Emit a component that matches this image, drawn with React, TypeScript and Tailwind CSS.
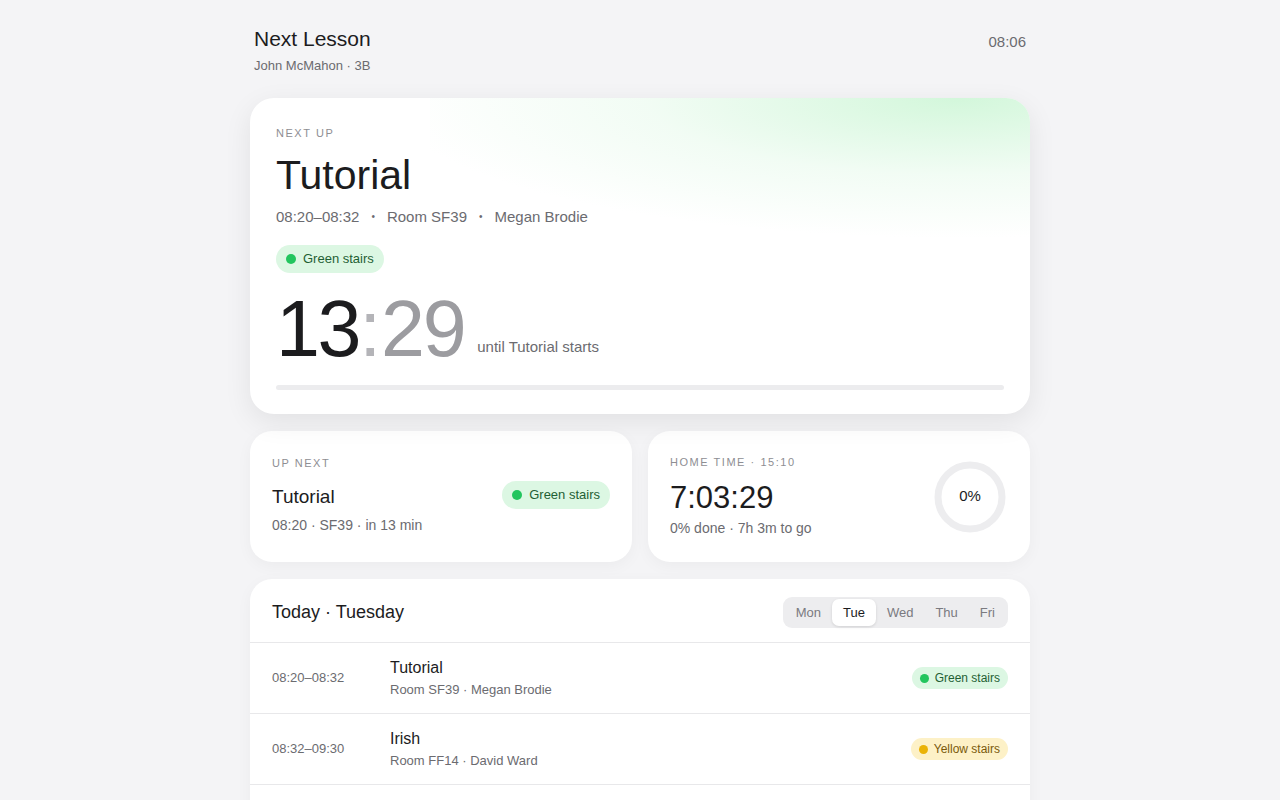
import React from "react";

const font = { fontFamily: '"Liberation Sans", Arial, sans-serif' };

type Stairs = "green" | "yellow";

const Pill = ({ kind, size = "md" }: { kind: Stairs; size?: "md" | "sm" }) => {
  const green = kind === "green";
  const base = size === "md" ? "h-[28px] px-[10px] gap-[7px] text-[13px]" : "h-[22px] px-[8px] gap-[6px] text-[12px]";
  return (
    <span
      className={`inline-flex items-center rounded-full ${base} ${
        green ? "bg-[#dcf7e3] text-[#1f5f34]" : "bg-[#fdf1c7] text-[#7a5a0c]"
      }`}
    >
      <span
        className={`rounded-full ${size === "md" ? "h-[10px] w-[10px]" : "h-[9px] w-[9px]"} ${
          green ? "bg-[#22c55e]" : "bg-[#eab308]"
        }`}
      />
      {green ? "Green stairs" : "Yellow stairs"}
    </span>
  );
};

// only the rows that fit in the first screen
const lessons = [
  { time: "08:20–08:32", title: "Tutorial", sub: "Room SF39 · Megan Brodie", stairs: "green" as Stairs },
  { time: "08:32–09:30", title: "Irish", sub: "Room FF14 · David Ward", stairs: "yellow" as Stairs },
];

const days = ["Mon", "Tue", "Wed", "Thu", "Fri"];

export default function App() {
  return (
    <div className="min-h-screen bg-[#f4f4f6] text-[#1c1c1e]" style={font}>
      <div className="mx-auto w-[780px] pt-[26px] pb-10">
        {/* header */}
        <div className="flex items-start justify-between px-[4px]">
          <div>
            <h1 className="text-[21px] leading-[26px] text-[#1c1c1e]">Next Lesson</h1>
            <p className="mt-[6px] text-[13px] leading-[16px] text-[#6b6b70]">John McMahon · 3B</p>
          </div>
          <div className="mt-[5px] text-[15px] text-[#6b6b70]">08:06</div>
        </div>

        {/* hero */}
        <div className="relative mt-[24px] overflow-hidden rounded-[24px] bg-white shadow-[0_8px_28px_rgba(0,0,0,0.08)]">
          <div className="pointer-events-none absolute right-0 top-0 h-[140px] w-[600px] bg-[radial-gradient(ellipse_95%_100%_at_88%_0%,rgba(200,245,210,0.8),rgba(222,248,228,0.4)_55%,rgba(255,255,255,0)_100%)]" />
          <div className="relative px-[26px] pt-[28px] pb-[24px]">
            <div className="text-[11px] leading-[14px] tracking-[0.14em] text-[#8e8e93]">NEXT UP</div>
            <div className="mt-[12px] text-[41px] leading-[46px] text-[#1c1c1e]">Tutorial</div>
            <div className="mt-[10px] flex items-center text-[15px] leading-[18px] text-[#6b6b70]">
              <span>08:20–08:32</span>
              <span className="mx-[12px] text-[10px]">•</span>
              <span>Room SF39</span>
              <span className="mx-[12px] text-[10px]">•</span>
              <span>Megan Brodie</span>
            </div>
            <div className="mt-[19px]">
              <Pill kind="green" />
            </div>
            <div className="mt-[16px] flex items-baseline">
              <span className="text-[79px] leading-[80px] tracking-[-0.03em] text-[#1c1c1e]">13</span>
              <span className="text-[79px] leading-[80px] text-[#b4b4b8]">:</span>
              <span className="text-[79px] leading-[80px] tracking-[-0.03em] text-[#9c9ca0]">29</span>
              <span className="ml-[13px] -translate-y-[4px] text-[15px] text-[#6b6b70]">until Tutorial starts</span>
            </div>
            <div className="mt-[16px] h-[5px] rounded-full bg-[#ececee]" />
          </div>
        </div>

        {/* cards row */}
        <div className="mt-[17px] grid grid-cols-2 gap-[16px]">
          <div className="flex h-[131px] items-center justify-between rounded-[22px] bg-white px-[22px] shadow-[0_4px_16px_rgba(0,0,0,0.04)]">
            <div className="-mt-[3px]">
              <div className="text-[11px] leading-[14px] tracking-[0.14em] text-[#8e8e93]">UP NEXT</div>
              <div className="mt-[15px] text-[19px] leading-[24px] text-[#1c1c1e]">Tutorial</div>
              <div className="mt-[8px] text-[14px] leading-[17px] text-[#6b6b70]">08:20 · SF39 · in 13 min</div>
            </div>
            <div className="-mt-[3px]">
              <Pill kind="green" />
            </div>
          </div>
          <div className="flex h-[131px] items-center justify-between rounded-[22px] bg-white pl-[22px] pr-[24px] shadow-[0_4px_16px_rgba(0,0,0,0.04)]">
            <div className="-mt-[2px]">
              <div className="text-[11px] leading-[14px] tracking-[0.14em] text-[#8e8e93]">HOME TIME · 15:10</div>
              <div className="mt-[12px] text-[31px] leading-[34px] text-[#1c1c1e]">7:03:29</div>
              <div className="mt-[5px] text-[14px] leading-[17px] text-[#6b6b70]">0% done · 7h 3m to go</div>
            </div>
            <div className="relative h-[72px] w-[72px]">
              <svg width="72" height="72" viewBox="0 0 72 72" className="absolute inset-0">
                <circle cx="36" cy="36" r="32" fill="none" stroke="#ededef" strokeWidth="7" />
              </svg>
              <div className="absolute inset-0 flex items-center justify-center text-[15px] text-[#1c1c1e]">0%</div>
            </div>
          </div>
        </div>

        {/* schedule */}
        <div className="mt-[17px] overflow-hidden rounded-[22px] bg-white shadow-[0_4px_16px_rgba(0,0,0,0.04)]">
          <div className="flex h-[64px] items-center justify-between border-b border-[#e8e8ea] px-[22px] pt-[4px]">
            <div className="text-[18px] text-[#1c1c1e]">Today · Tuesday</div>
            <div className="flex h-[31px] items-center rounded-[9px] bg-[#ededef] p-[2px]">
              {days.map((d) => (
                <div
                  key={d}
                  className={`flex h-[27px] items-center justify-center rounded-[7px] px-[11px] text-[13px] ${
                    d === "Tue" ? "bg-white text-[#1c1c1e] shadow-[0_1px_3px_rgba(0,0,0,0.12)]" : "text-[#7a7a80]"
                  }`}
                >
                  {d}
                </div>
              ))}
            </div>
          </div>
          {lessons.map((l) => (
            <div key={l.time} className="flex h-[71px] items-center border-b border-[#e8e8ea] px-[22px]">
              <div className="w-[118px] text-[13px] text-[#6b6b70]">{l.time}</div>
              <div className="flex-1">
                <div className="text-[16px] leading-[20px] text-[#1c1c1e]">{l.title}</div>
                <div className="mt-[4px] text-[13px] leading-[16px] text-[#6b6b70]">{l.sub}</div>
              </div>
              <Pill kind={l.stairs} size="sm" />
            </div>
          ))}
          <div className="h-[71px]" />
        </div>
      </div>
    </div>
  );
}
